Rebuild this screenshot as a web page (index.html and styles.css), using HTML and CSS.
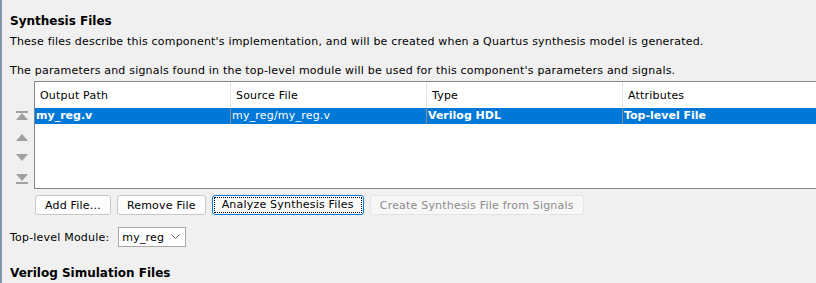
FILE: index.html
```html
<!DOCTYPE html>
<html lang="en">
<head>
    <meta charset="UTF-8">
    <title>Synthesis Files</title>
    <link rel="stylesheet" href="styles.css">
</head>
<body>
    <div class="panel">
        <h2 class="title">Synthesis Files</h2>
        <p class="desc">These files describe this component's implementation, and will be created when a Quartus synthesis model is generated.</p>
        <p class="desc gap">The parameters and signals found in the top-level module will be used for this component's parameters and signals.</p>

        <div class="files">
            <div class="arrows">
                <svg class="arrow" width="12" height="10" viewBox="0 0 12 10"><rect x="0" y="0" width="12" height="2" fill="#a0a0a0"/><polygon points="6,2 12,9 0,9" fill="#a0a0a0"/></svg>
                <svg class="arrow" width="12" height="10" viewBox="0 0 12 10"><polygon points="6,2 12,9 0,9" fill="#a0a0a0"/></svg>
                <svg class="arrow" width="12" height="10" viewBox="0 0 12 10"><polygon points="0,1 12,1 6,8" fill="#a0a0a0"/></svg>
                <svg class="arrow" width="12" height="10" viewBox="0 0 12 10"><polygon points="0,0 12,0 6,7" fill="#a0a0a0"/><rect x="0" y="8" width="12" height="2" fill="#a0a0a0"/></svg>
            </div>
            <div class="table">
                <div class="row head">
                    <div class="cell">Output Path</div>
                    <div class="cell">Source File</div>
                    <div class="cell">Type</div>
                    <div class="cell">Attributes</div>
                </div>
                <div class="row selected">
                    <div class="cell bold">my_reg.v</div>
                    <div class="cell">my_reg/my_reg.v</div>
                    <div class="cell bold">Verilog HDL</div>
                    <div class="cell bold">Top-level File</div>
                </div>
            </div>
        </div>

        <div class="buttons">
            <button class="btn">Add File...</button>
            <button class="btn">Remove File</button>
            <button class="btn focused"><span>Analyze Synthesis Files</span></button>
            <button class="btn" disabled>Create Synthesis File from Signals</button>
        </div>

        <div class="module">
            <span>Top-level Module:</span>
            <div class="combo">my_reg
                <svg width="9" height="6" viewBox="0 0 9 6"><polyline points="0.5,0.5 4.5,4.5 8.5,0.5" fill="none" stroke="#606060" stroke-width="1"/></svg>
            </div>
        </div>

        <h2 class="title sim">Verilog Simulation Files</h2>
    </div>
</body>
</html>
```

FILE: styles.css
```css
*{
    margin:0px;
    padding:0px;
    box-sizing:border-box;
}
html,body{
    height:100%;
    overflow:hidden;
}
body{
    background-color:#f0f0f0;
    border-left:2px solid #8494aa;
    font-family:"DejaVu Sans", Verdana, sans-serif;
    font-size:11px;
    letter-spacing:0.2px;
    color:#000;
}
.panel{
    padding:13px 0 0 8px;
}
.title{
    font-size:12px;
    font-weight:bold;
    letter-spacing:0;
    line-height:16px;
    height:16px;
}
.desc{
    line-height:16px;
    margin-top:5px;
    white-space:nowrap;
}
.desc.gap{
    margin-top:13px;
}
.files{
    display:flex;
    margin-top:2px;
}
.arrows{
    flex:none;
    width:24px;
    display:flex;
    flex-direction:column;
    align-items:center;
    padding-top:30px;
    gap:11px;
}
.table{
    flex:none;
    width:800px;
    height:108px;
    background:#fff;
    border:1px solid #828790;
    border-right:none;
}
.row{
    display:flex;
}
.cell{
    width:196px;
    flex:none;
    padding-left:5px;
    white-space:nowrap;
    border-right:1px solid #e5e5e5;
}
.head .cell{
    height:26px;
    padding-top:1px;
    line-height:25px;
}
.selected{
    background:#0078d7;
    color:#fff;
}
.selected .cell{
    height:16px;
    line-height:16px;
    padding-left:1px;
    border-right-color:#8c8c8c;
}
.bold{
    font-weight:bold;
    letter-spacing:0;
}
.buttons{
    display:flex;
    gap:6px;
    margin:6px 0 0 25px;
}
.btn{
    height:20px;
    padding:0 9px;
    font-family:inherit;
    font-size:11px;
    letter-spacing:0.2px;
    background:#fdfdfd;
    border:1px solid #c8c8c8;
    border-radius:3px;
    color:#000;
}
.btn.focused{
    border-color:#0078d7;
    padding:1px;
}
.btn.focused span{
    display:block;
    height:16px;
    line-height:14px;
    padding:0 7px;
    border:1px dotted #000;
}
.btn:disabled{
    color:#8c8c8c;
    border-color:#e4e4e4;
    background:#f7f7f7;
}
.module{
    display:flex;
    align-items:center;
    gap:9px;
    margin-top:12px;
}
.combo{
    height:20px;
    width:68px;
    border:1px solid #a8a8a8;
    background:#fff;
    display:flex;
    align-items:center;
    justify-content:space-between;
    padding:0 5px 0 3px;
}
.sim{
    margin-top:18px;
}
```
